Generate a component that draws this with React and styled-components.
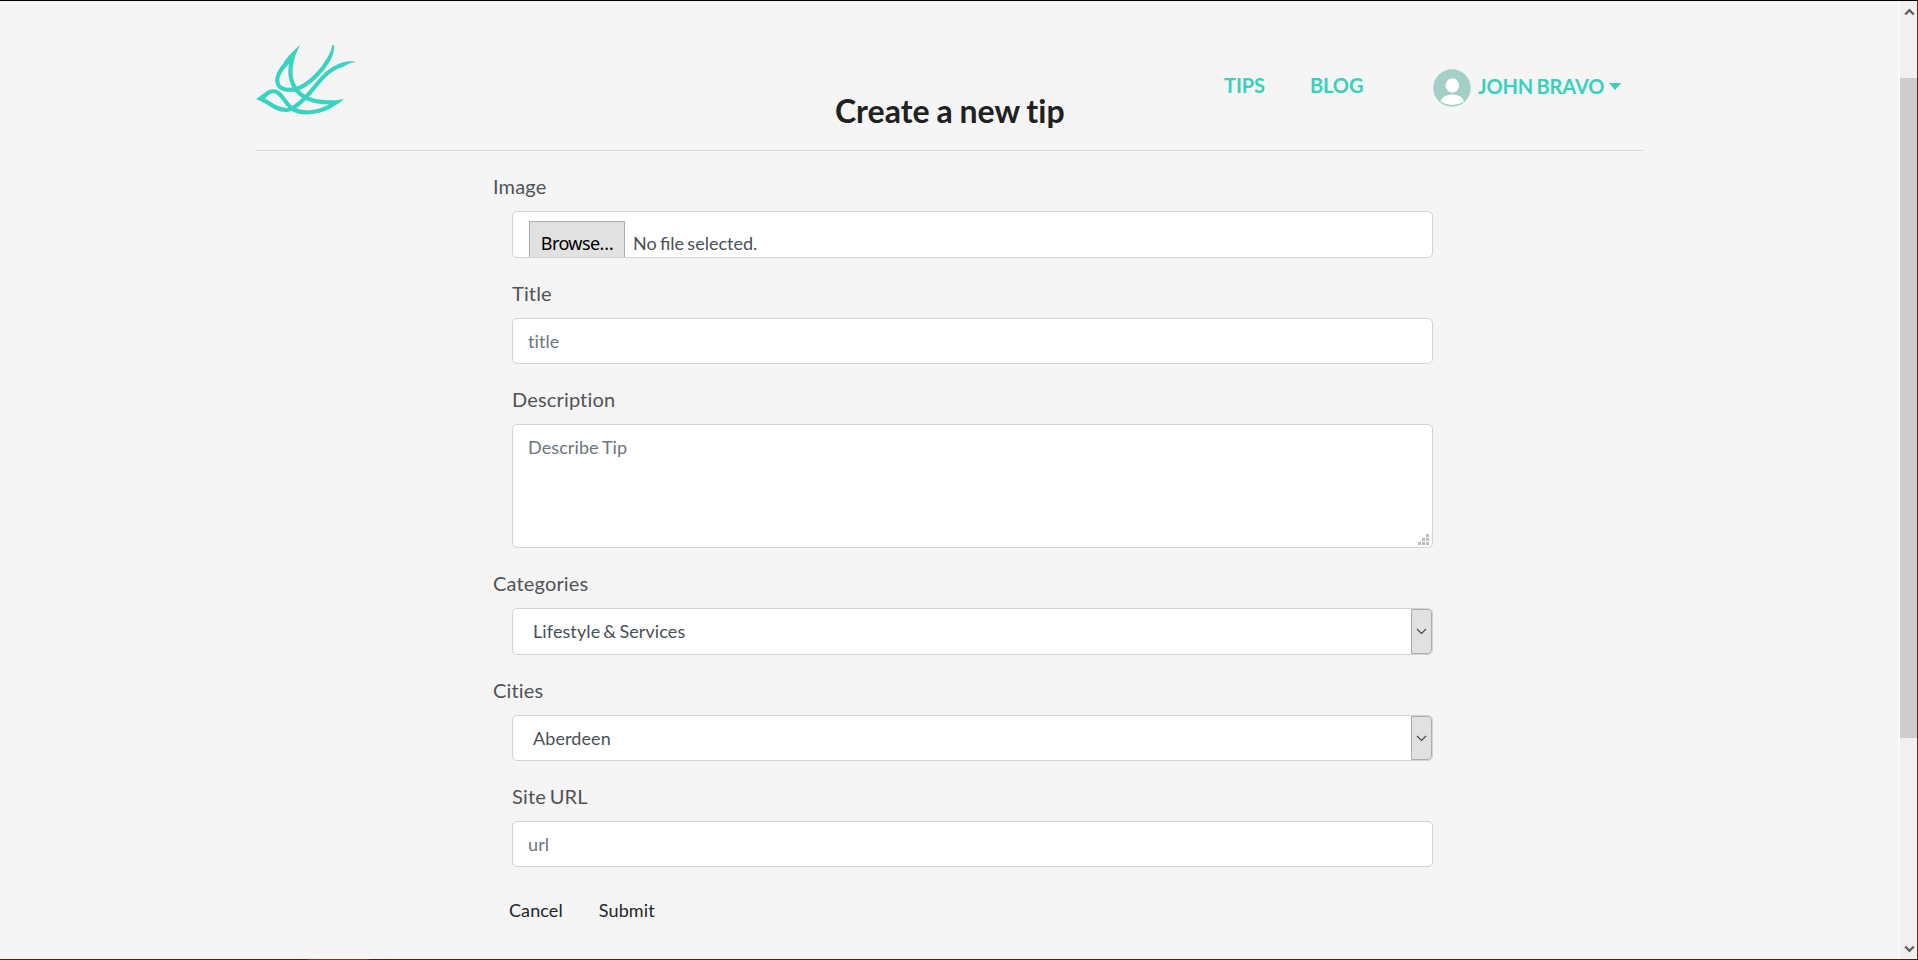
import React from "react";
import styled, { createGlobalStyle } from "styled-components";

const Global = createGlobalStyle`
  *, *::before, *::after { box-sizing: border-box; }
  body { margin: 0; background: #f4f4f4; font-family: Lato, "Liberation Sans", sans-serif; color: #212529; overflow: hidden; font-variant-ligatures: none; }
`;

const Window = styled.div`
  display: grid;
  grid-template: 1px 958px 1px / 1899px 18px 1px;
  width: 1918px;
  height: 960px;
  background: #f5f5f5;
`;
const TopEdge = styled.div`
  grid-column: 1 / -1;
  background: #000;
`;
const RightEdge = styled.div`
  background: #7d2408;
`;
const BottomEdge = styled.div`
  grid-column: 1 / -1;
  background: linear-gradient(90deg, #561a08 308px, #8a2b10 308px 369px, #561a08 369px);
`;
const Page = styled.div`
  padding-left: 256px;
`;

const Header = styled.header`
  display: flex;
  align-items: flex-start;
  width: 1387px;
  height: 150px;
  border-bottom: 1px solid #dadada;
`;
const Logo = styled.svg`
  flex: none;
  margin-top: 43px;
  width: 100px;
  height: 72px;
`;
const Heading = styled.h1`
  margin: 90px 0 0 479px;
  width: 232px;
  font-size: 32px;
  line-height: 40px;
  font-weight: 700;
  white-space: nowrap;
  word-spacing: -0.9px;
  color: #212121;
`;
const Nav = styled.nav`
  display: flex;
  margin: 68px 0 0 157px;
  font-size: 20px;
  font-weight: 700;
  line-height: 32px;
  letter-spacing: -0.1px;
  color: #38d1bd;
  white-space: nowrap;
`;
const NavItem = styled.span`
  width: ${(p) => p.$w}px;
`;
const User = styled.span`
  display: flex;
  align-items: center;
  height: 38px;
`;
const Avatar = styled.svg`
  width: 38px;
  height: 38px;
  margin-right: 7px;
`;
const UserName = styled.span`
  width: 127px;
  margin-top: -4px;
  word-spacing: -1.5px;
`;
const Caret = styled.span`
  margin: -3px 0 0 4px;
  border: 6px solid transparent;
  border-top: 7px solid #38d1bd;
  border-bottom: 0;
`;

const Form = styled.form`
  display: flex;
  flex-direction: column;
  width: 940px;
  margin: 19px 0 0 237px;
`;
const Label = styled.label`
  height: 33px;
  margin-left: ${(p) => (p.$indent ? 19 : 0)}px;
  font-size: 20px;
  line-height: 33px;
  letter-spacing: 0.16px;
  word-spacing: -1.5px;
  color: #505356;
`;
const Field = styled.div`
  position: relative;
  display: flex;
  width: 921px;
  height: ${(p) => p.$h}px;
  margin: 8px 0 ${(p) => p.$gap}px 19px;
  border: 1px solid #ced4da;
  border-radius: 5px;
  background: #fff;
  overflow: hidden;
  font-size: 18px;
  color: #495057;
`;
const textEntry = `
  flex: 1;
  border: 0;
  outline: 0;
  background: transparent;
  font: inherit;
  color: inherit;
  resize: none;
  letter-spacing: 0.1px;
  word-spacing: -1px;
  font-variant-ligatures: none;
  &::placeholder { color: #6c757d; opacity: 1; }
`;
const Input = styled.input`
  ${textEntry}
  padding: 0 15px;
`;
const TextArea = styled.textarea`
  ${textEntry}
  padding: 9px 15px;
  line-height: 27px;
`;
const Grip = styled.svg`
  position: absolute;
  right: 3px;
  bottom: 2px;
`;
const Browse = styled.span`
  flex: none;
  width: 96px;
  height: 46px;
  margin: 9px 8px 0 16px;
  border: 1px solid #adadad;
  background: #e1e1e1;
  color: #000;
  font-family: "Noto Sans", sans-serif;
  font-size: 18px;
  line-height: 43px;
  text-align: center;
  letter-spacing: -0.6px;
`;
const FileName = styled.span`
  margin-top: 8px;
  line-height: 46px;
  word-spacing: -1.3px;
  font-variant-ligatures: normal;
`;
const Selected = styled.span`
  flex: 1;
  padding-left: 20px;
  line-height: ${(p) => p.$h}px;
  letter-spacing: 0.1px;
  word-spacing: -1.6px;
`;
const DropButton = styled.span`
  display: flex;
  align-items: center;
  justify-content: center;
  width: 21px;
  border: 1px solid #adadad;
  border-radius: 0 4px 4px 0;
  background: #e1e1e1;
`;
const Actions = styled.div`
  display: flex;
  gap: 36px;
  margin: 1px 0 0 16px;
  font-size: 18px;
  line-height: 32px;
  letter-spacing: 0.1px;
`;

const ScrollBar = styled.div`
  display: flex;
  flex-direction: column;
  align-items: stretch;
  border-left: 1px solid #fff;
  background: #f0f0f0;
`;
const ScrollArrow = styled.svg`
  width: 17px;
  height: 17px;
  margin: ${(p) => p.$m};
`;
const Thumb = styled.div`
  height: 660px;
  background: #cdcdcd;
`;

const Bird = () => (
  <Logo viewBox="48 42 300 216" fill="none" stroke="#38d4c1" strokeWidth="12.5" strokeLinejoin="round">
    <path d="M149 91C118 118 103 149 117 168C128 181 152 182 171 176C211 162 248 120 267 86" />
    <path d="M155 92C149 118 149 154 170 181C192 208 235 218 277 217" />
    <path d="M313 102C261 119 246 146 218 178C194 207 166 237 140 240C110 241 89 220 66 207C81 188 94 178 112 187C134 202 139 228 164 240C196 255 246 244 278 224" />
    <g fill="#38d4c1" stroke="none">
      <path d="M181 44C172 62 162 82 161 100L152 94L140 106L130 99C143 78 158 65 181 44Z" />
      <path d="M276 45Q284 43 282 56Q281 72 272 90L261 84Q275 63 276 45Z" />
      <path d="M349 96Q329 98 314 108L311 96Q330 91 349 96Z" />
      <path d="M312 207Q298 221 281 229L274 222L270 211Q291 212 312 207Z" />
      <path d="M48 207L72 190L80 198L73 208L82 215L76 220Z" />
    </g>
  </Logo>
);

const Drop = () => (
  <DropButton>
    <svg width="11" height="7" viewBox="0 0 11 7" fill="none" stroke="#444" strokeWidth="1.1">
      <path d="M1 1L5.5 5.5L10 1" />
    </svg>
  </DropButton>
);

export default function App() {
  return (
    <Window>
      <Global />
      <TopEdge />
      <Page>
        <Header>
          <Bird />
          <Heading>Create a new tip</Heading>
          <Nav>
            <NavItem $w={86}>TIPS</NavItem>
            <NavItem $w={123}>BLOG</NavItem>
            <User>
              <Avatar viewBox="0 0 38 38">
                <circle cx="19" cy="19" r="18.7" fill="#a4cfc6" />
                <ellipse cx="19.3" cy="16.5" rx="6.8" ry="7.2" fill="#fff" />
                <path d="M7.5 32.5C10 23 28.500 23 31 32.500Q19 39.500 7.500 32.500Z" fill="#fff" />
              </Avatar>
              <UserName>JOHN BRAVO</UserName>
              <Caret />
            </User>
          </Nav>
        </Header>
        <Form>
          <Label>Image</Label>
          <Field $h={47} $gap={19}>
            <Browse>Browse…</Browse>
            <FileName>No file selected.</FileName>
          </Field>
          <Label $indent>Title</Label>
          <Field $h={46} $gap={19}>
            <Input placeholder="title" />
          </Field>
          <Label $indent>Description</Label>
          <Field $h={124} $gap={19}>
            <TextArea placeholder="Describe Tip" />
            <Grip width="11" height="11" fill="#bcbcbc">
              <path d="M8 0h3v3h-3zM4 4h3v3h-3zM8 4h3v3h-3zM0 8h3v3h-3zM4 8h3v3h-3zM8 8h3v3h-3z" />
            </Grip>
          </Field>
          <Label>Categories</Label>
          <Field $h={47} $gap={19}>
            <Selected $h={45}>Lifestyle &amp; Services</Selected>
            <Drop />
          </Field>
          <Label>Cities</Label>
          <Field $h={46} $gap={19}>
            <Selected $h={44}>Aberdeen</Selected>
            <Drop />
          </Field>
          <Label $indent>Site URL</Label>
          <Field $h={46} $gap={26}>
            <Input placeholder="url" />
          </Field>
          <Actions>
            <span>Cancel</span>
            <span>Submit</span>
          </Actions>
        </Form>
      </Page>
      <ScrollBar>
        <ScrollArrow $m="2px 0 58px" viewBox="0 0 17 17" fill="none" stroke="#606060" strokeWidth="2.4">
          <path d="M5.200 11.500L9.500 7.200L13.800 11.500" />
        </ScrollArrow>
        <Thumb />
        <ScrollArrow $m="202px 0 0" viewBox="0 0 17 17" fill="none" stroke="#606060" strokeWidth="2.4">
          <path d="M5.200 6.500L9.500 10.800L13.800 6.500" />
        </ScrollArrow>
      </ScrollBar>
      <RightEdge />
      <BottomEdge />
    </Window>
  );
}
